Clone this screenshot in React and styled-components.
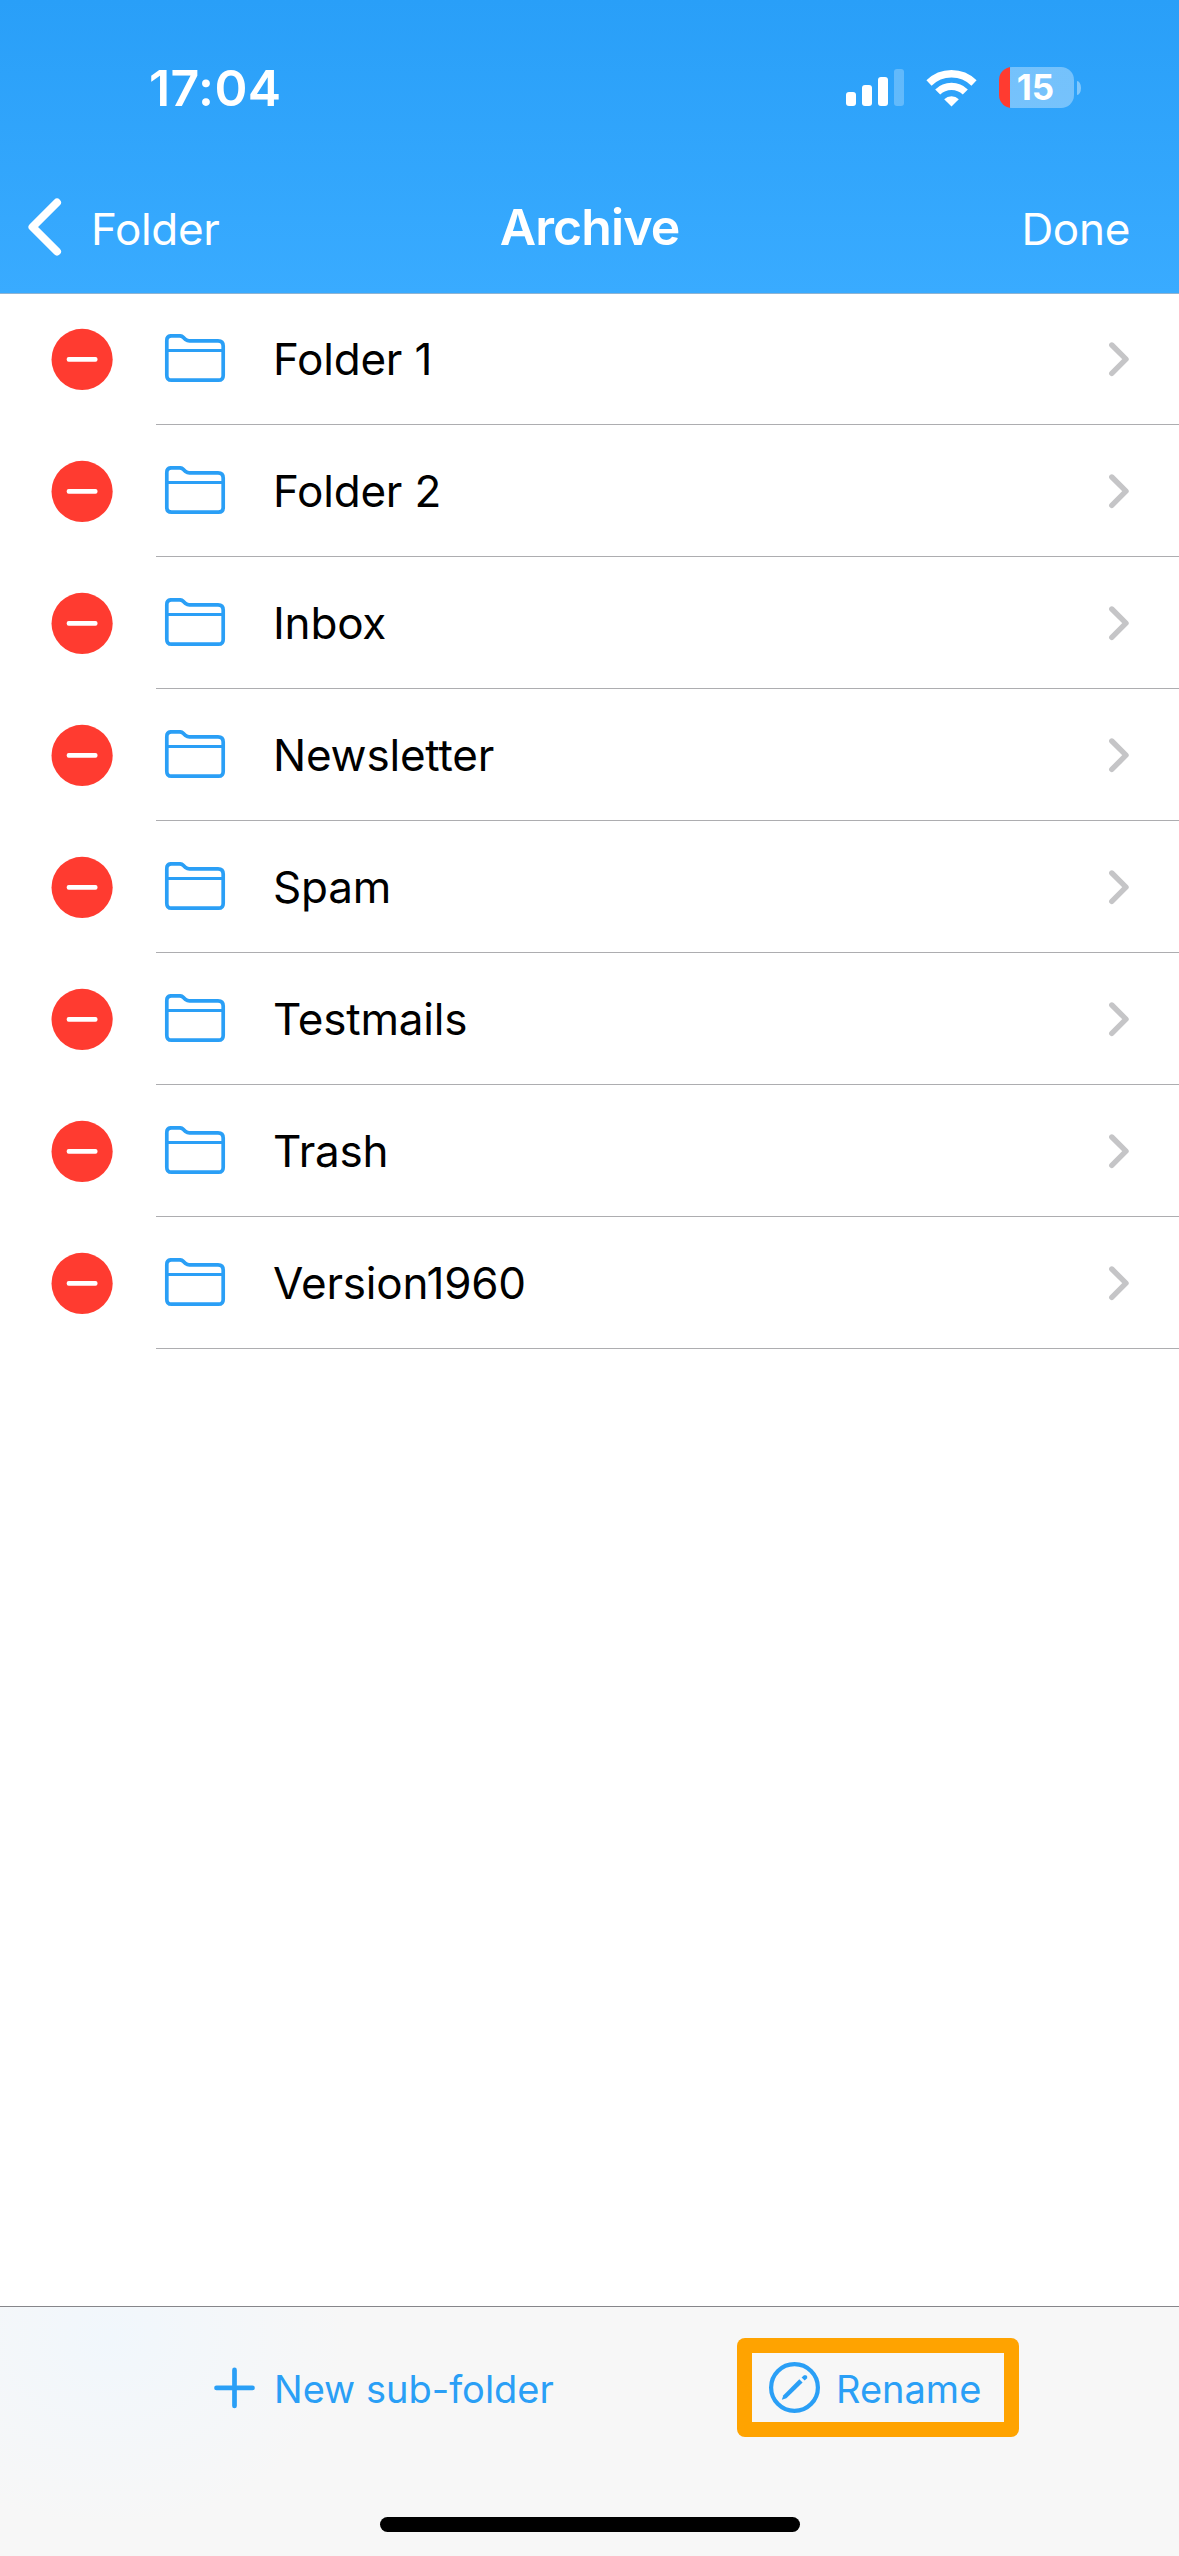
import React from "react";

import styled, { createGlobalStyle } from "styled-components";

const GlobalStyle = createGlobalStyle`
  *,
  *::before,
  *::after {
    box-sizing: border-box;
  }

  :root {
    --accent: #2a9ff6;
    --danger: #ff3b30;
    --highlight: #ffa300;
    --separator: #adadb0;
  }

  body {
    margin: 0;
    background-color: white;
    font-family: Inter, "Liberation Sans", sans-serif;
  }
`;

const Screen = styled.div`
  width: 1179px;
  height: 2556px;
  display: flex;
  flex-direction: column;
  overflow: hidden;
  background-color: white;
`;

const Header = styled.header`
  flex: none;
  height: 293px;
  display: flex;
  flex-direction: column;
  color: white;
  background: linear-gradient(#299ff8, #39abff);
  box-shadow: 0 1px 0 #90b4d2;
`;

const StatusBar = styled.div`
  height: 175px;
  padding: 0 98px 0 149px;
  display: flex;
  align-items: center;
  justify-content: space-between;
`;

const Clock = styled.span`
  font-size: 50px;
  font-weight: 600;
  line-height: 60px;
  letter-spacing: 0.4px;
`;

const StatusIcons = styled.div`
  display: flex;
  align-items: center;
`;

const SignalBars = styled.div`
  height: 37px;
  display: flex;
  align-items: flex-end;
  gap: 6px;
  margin-right: 22px;
`;

const SignalBar = styled.span`
  width: 10px;
  height: ${(p) => p.$height}px;
  border-radius: 3px;
  background-color: white;
  opacity: ${(p) => (p.$dim ? 0.25 : 1)};
`;

const WifiIcon = styled.svg`
  width: 51px;
  height: 38px;
  margin-right: 22px;
`;

const Battery = styled.div`
  width: 75px;
  height: 41px;
  padding: 0 2px 0 0;
  display: flex;
  align-items: center;
  justify-content: center;
  border-radius: 13px;
  background: linear-gradient(
    to right,
    var(--danger) 11px,
    rgba(255, 255, 255, 0.34) 11px
  );
  font-size: 35px;
  font-weight: 700;
  line-height: 41px;
`;

const BatteryCap = styled.span`
  width: 4px;
  height: 14px;
  margin-left: 3px;
  border-radius: 0 4px 4px 0 / 0 7px 7px 0;
  background-color: rgba(255, 255, 255, 0.4);
`;

const NavBar = styled.nav`
  height: 104px;
  padding: 0 28px;
  display: grid;
  grid-template-columns: 1fr auto 1fr;
  align-items: center;
`;

const NavButton = styled.button`
  margin-right: ${(p) => (p.$end ? "21px" : "0")};
  padding: 0;
  display: flex;
  align-items: center;
  justify-self: ${(p) => (p.$end ? "end" : "start")};
  gap: 29px;
  border: none;
  background: none;
  color: inherit;
  font: inherit;
  font-size: 44px;
  line-height: 56px;
  letter-spacing: -0.3px;
`;

const NavLabel = styled.span`
  padding-top: 4px;
`;

const BackIcon = styled.svg`
  width: 34px;
  height: 58px;
`;

const Title = styled.h1`
  margin: 0;
  font-size: 50px;
  font-weight: 600;
  line-height: 60px;
  letter-spacing: -0.9px;
`;

const FolderList = styled.ul`
  flex: 1;
  margin: 0;
  padding: 0;
  list-style: none;
`;

const Row = styled.li`
  height: 132px;
  padding-left: 51px;
  display: flex;
  align-items: center;
`;

const RemoveIcon = styled.svg`
  width: 62px;
  height: 62px;
  margin-right: 43px;
`;

const RowBody = styled.div`
  flex: 1;
  height: 132px;
  padding: 0 49px 0 8px;
  display: flex;
  align-items: center;
  border-bottom: 1px solid var(--separator);
`;

const FolderIcon = styled.svg`
  width: 62px;
  height: 49px;
  margin-right: 47px;
`;

const FolderName = styled.span`
  flex: 1;
  color: black;
  font-size: 44px;
  line-height: 56px;
  letter-spacing: -0.2px;
`;

const ChevronIcon = styled.svg`
  width: 22px;
  height: 37px;
`;

const Toolbar = styled.footer`
  flex: none;
  height: 250px;
  display: flex;
  flex-direction: column;
  align-items: center;
  border-top: 1px solid #86868a;
  background:
    radial-gradient(
      ellipse 240px 190px at 110px 30px,
      #f1f7fc,
      rgba(247, 247, 247, 0)
    ),
    #f7f7f7;
`;

const ToolbarActions = styled.div`
  width: 100%;
  height: 210px;
  padding: 31px 160px 0 213px;
  display: flex;
  align-items: flex-start;
  justify-content: space-between;
`;

const ToolbarButton = styled.button`
  height: 99px;
  padding: 0;
  display: flex;
  align-items: center;
  gap: ${(p) => p.$gap}px;
  border: none;
  background: none;
  color: var(--accent);
  font: inherit;
  font-size: 38px;
  line-height: 50px;
`;

const ToolbarLabel = styled.span`
  padding-top: 3px;
`;

const Highlight = styled.div`
  width: 282px;
  height: 99px;
  padding-left: 31px;
  display: flex;
  align-items: center;
  border-radius: 8px;
  background:
    linear-gradient(#f7f7f7, #f7f7f7) center / 252px 69px no-repeat,
    var(--highlight);
`;

const PlusIcon = styled.svg`
  width: 43px;
  height: 43px;
`;

const RenameIcon = styled.svg`
  width: 53px;
  height: 53px;
`;

const HomeIndicator = styled.div`
  width: 420px;
  height: 15px;
  border-radius: 8px;
  background-color: black;
`;

const folders = [
  "Folder 1",
  "Folder 2",
  "Inbox",
  "Newsletter",
  "Spam",
  "Testmails",
  "Trash",
  "Version1960",
];

const Wifi = () => (
  <WifiIcon viewBox="0 0 51 38" fill="none" stroke="white">
    <path d="M3 14A32 32 0 0 1 48 14" strokeWidth="7.4" />
    <path d="M11.7 23A19.8 19.8 0 0 1 39.3 23" strokeWidth="7.2" />
    <path
      d="M18.2 30.2A10.4 10.4 0 0 1 32.8 30.2L25.5 37.6Z"
      fill="white"
      stroke="none"
    />
  </WifiIcon>
);

const Remove = () => (
  <RemoveIcon viewBox="0 0 62 62">
    <circle cx="31.1" cy="31.4" r="30.6" fill="#ff3b30" />
    <rect x="15.7" y="29" width="30.8" height="4.7" rx="2" fill="white" />
  </RemoveIcon>
);

const Folder = () => (
  <FolderIcon viewBox="0 1 62 49" fill="none" stroke="#2a9ff6" strokeWidth="3.7">
    <path d="M2.8 42.5V7.5Q2.8 2.8 7.5 2.8H15.5Q17.7 2.8 19.3 4.3L21.6 6.5Q23.3 7.8 25.5 7.8H54Q59.2 7.8 59.2 13V42.5Q59.2 47.2 54.5 47.2H7.5Q2.8 47.2 2.8 42.5Z" />
    <path d="M3 17.5H59" strokeWidth="3.2" />
  </FolderIcon>
);

const Chevron = () => (
  <ChevronIcon
    viewBox="0 0 22 37"
    fill="none"
    stroke="#c5c5c7"
    strokeWidth="5.4"
    strokeLinecap="round"
    strokeLinejoin="round"
  >
    <path d="M3.8 5L18 19.2L3.8 33.4" />
  </ChevronIcon>
);

const FolderRow = ({ name }) => (
  <Row>
    <Remove />
    <RowBody>
      <Folder />
      <FolderName>{name}</FolderName>
      <Chevron />
    </RowBody>
  </Row>
);

const App = () => {
  return (
    <Screen>
      <GlobalStyle />
      <Header>
        <StatusBar>
          <Clock>17:04</Clock>
          <StatusIcons>
            <SignalBars>
              <SignalBar $height={14} />
              <SignalBar $height={21} />
              <SignalBar $height={29} />
              <SignalBar $height={37} $dim />
            </SignalBars>
            <Wifi />
            <Battery>15</Battery>
            <BatteryCap />
          </StatusIcons>
        </StatusBar>
        <NavBar>
          <NavButton>
            <BackIcon
              viewBox="0 0 34 58"
              fill="none"
              stroke="white"
              strokeWidth="8"
              strokeLinecap="round"
              strokeLinejoin="round"
            >
              <path d="M29 4.5L4.5 29L29 53.5" />
            </BackIcon>
            <NavLabel>Folder</NavLabel>
          </NavButton>
          <Title>Archive</Title>
          <NavButton $end>
            <NavLabel>Done</NavLabel>
          </NavButton>
        </NavBar>
      </Header>
      <FolderList>
        {folders.map((name) => (
          <FolderRow key={name} name={name} />
        ))}
      </FolderList>
      <Toolbar>
        <ToolbarActions>
          <ToolbarButton $gap={18}>
            <PlusIcon
              viewBox="0 0 43 43"
              stroke="#2a9ff6"
              strokeWidth="4.7"
              strokeLinecap="round"
            >
              <path d="M21.5 3.9V39.9M3.5 21.9H39.5" />
            </PlusIcon>
            <ToolbarLabel>New sub-folder</ToolbarLabel>
          </ToolbarButton>
          <Highlight>
            <ToolbarButton $gap={15}>
              <RenameIcon viewBox="0 0 53 53" fill="#2a9ff6">
                <circle
                  cx="26.5"
                  cy="26.5"
                  r="23.4"
                  fill="none"
                  stroke="#2a9ff6"
                  strokeWidth="4.2"
                />
                <path d="M13.8 38.8L15.4 34.2L31.3 18.3L34.6 21.6L18.4 37.2Z" />
                <path d="M33.6 16.6L36 14.2H38.2L39.2 15.4V17.2L36.6 19.6Z" />
              </RenameIcon>
              <ToolbarLabel>Rename</ToolbarLabel>
            </ToolbarButton>
          </Highlight>
        </ToolbarActions>
        <HomeIndicator />
      </Toolbar>
    </Screen>
  );
};

export default App;
